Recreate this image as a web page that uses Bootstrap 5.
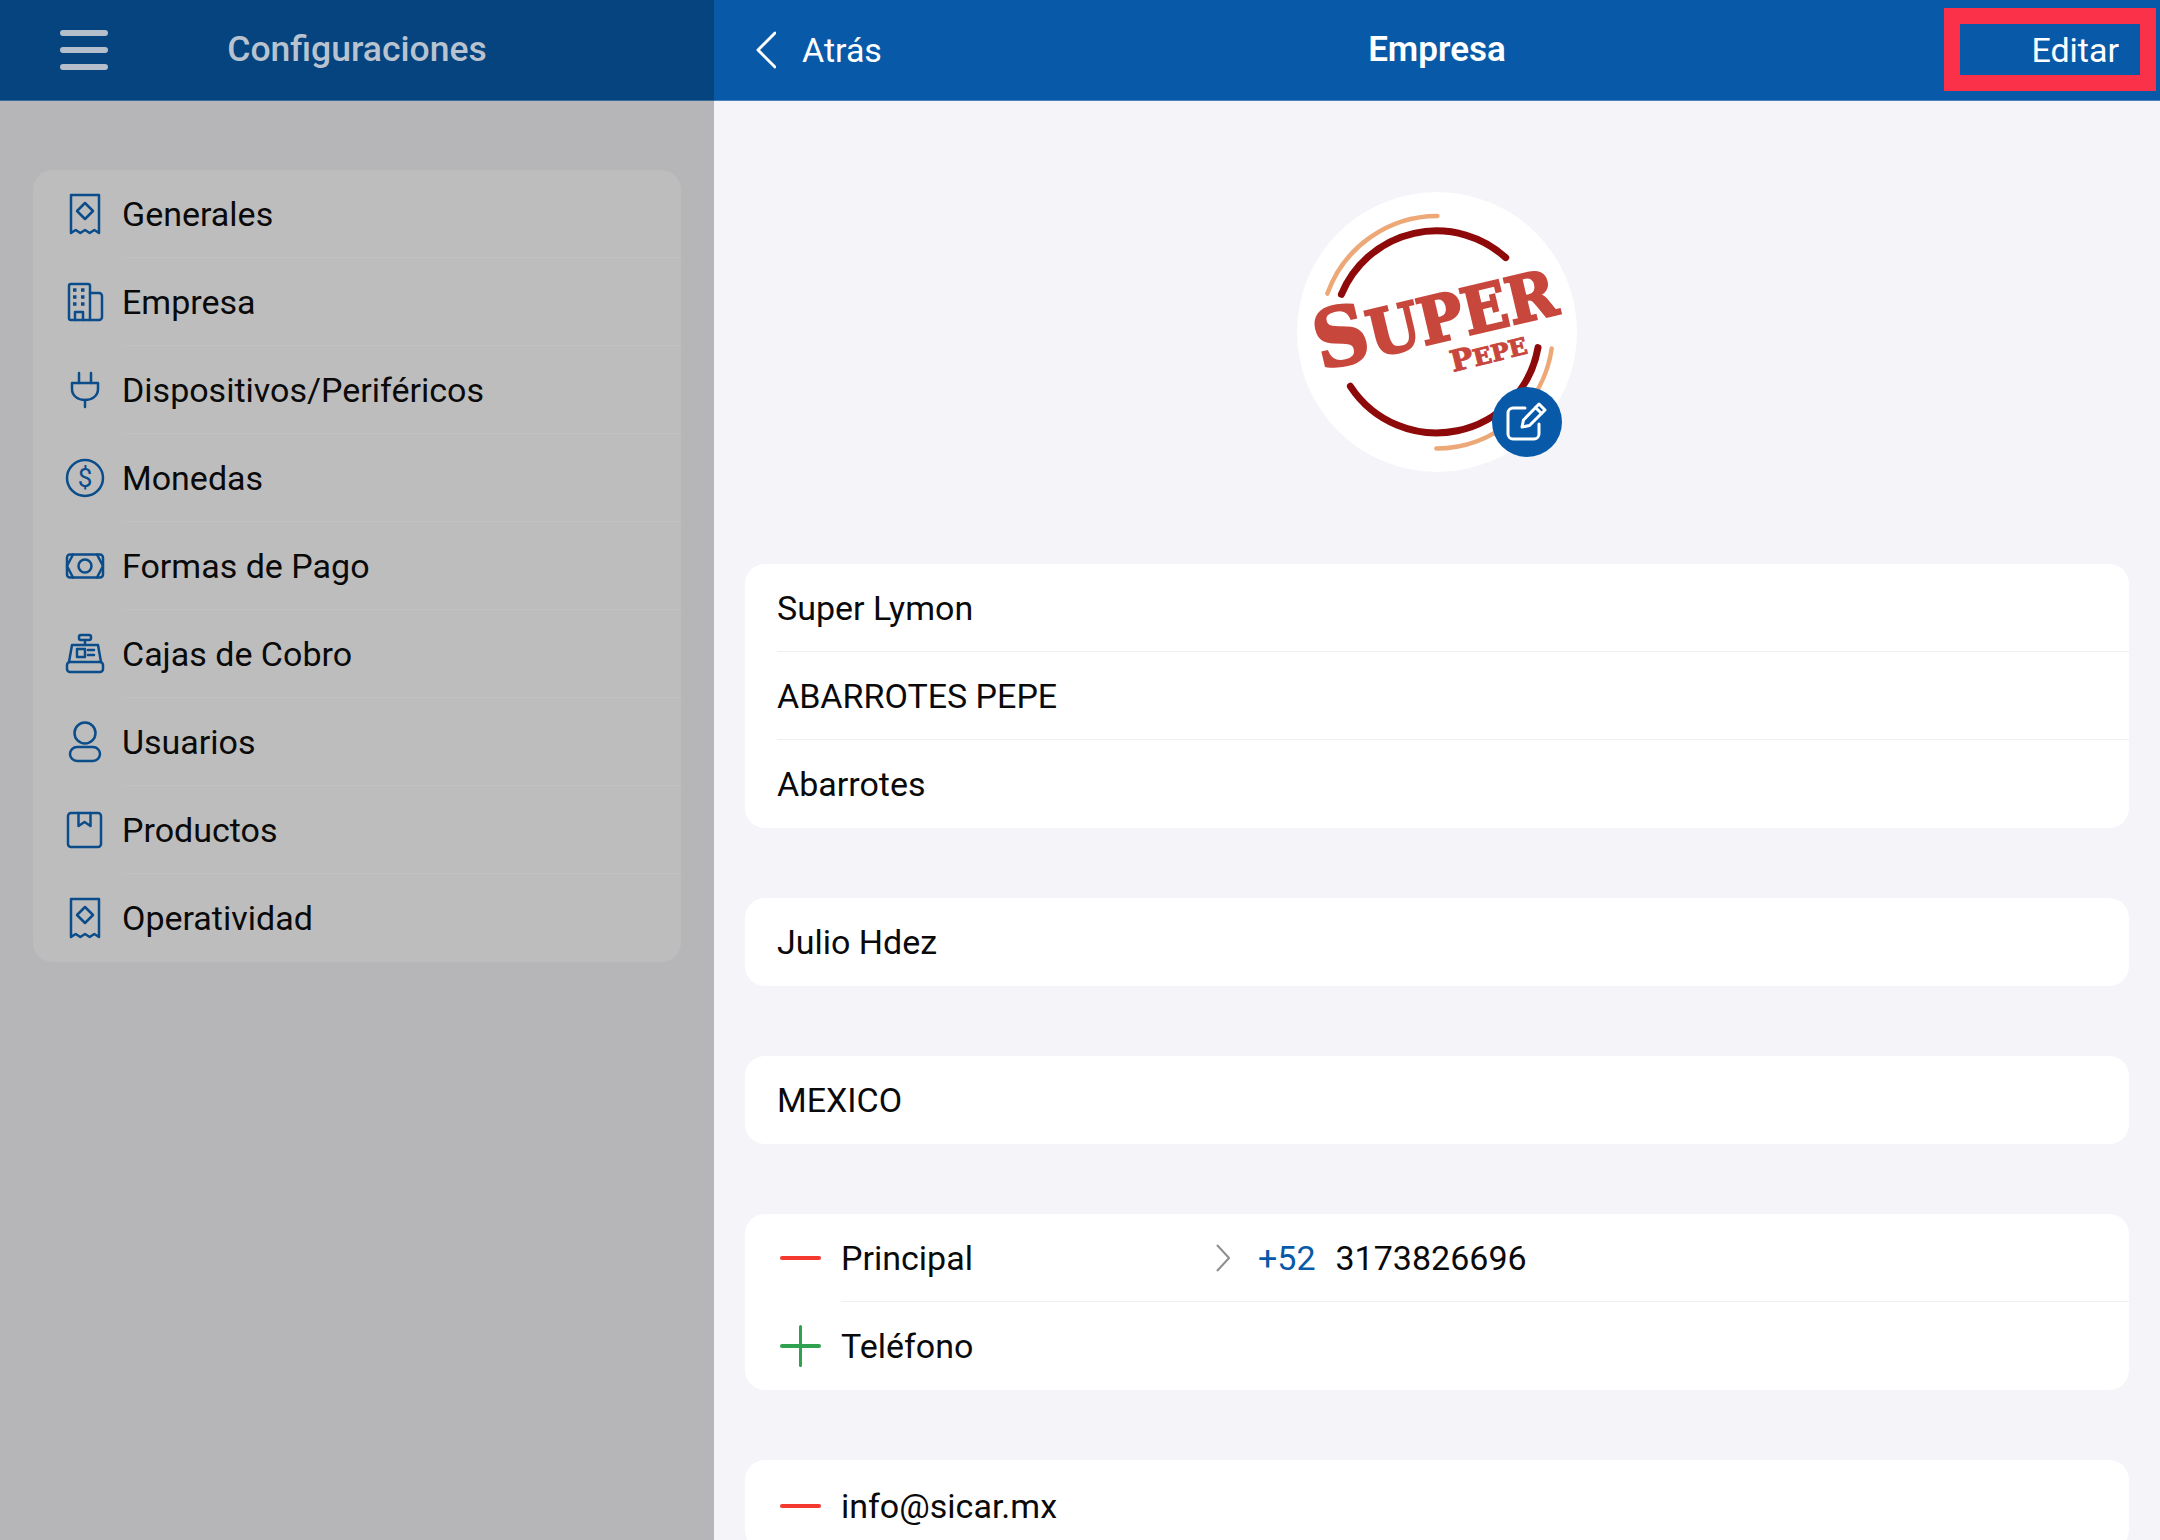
<!DOCTYPE html>
<html lang="es">
<head>
    <meta charset="UTF-8">
    <meta name="viewport" content="width=device-width, initial-scale=1.0">
    <title>Empresa</title>
    <link rel="stylesheet" href="https://cdn.jsdelivr.net/npm/bootstrap@5.3.0/dist/css/bootstrap.min.css">
    <style>
        body { font-family: Roboto, "Liberation Sans", sans-serif; font-size: 34px; background: #f4f4f9; color: #0a0a0a; }

        /* sidebar, dimmed */
        .side-pane { width: 714px; background: #b6b6b8; }
        .side-bar { height: 101px; background: #05447f; color: #b8c3cf; border-bottom: 1px solid #3a6a98; display: grid; grid-template-columns: 1fr auto 1fr; align-items: center; font-size: 35.500px; font-weight: 500; }
        .burger { margin-left: 60px; width: 48px; gap: 11px; }
        .burger span { height: 6px; background: #b5bfcc; border-radius: 3px; }
        .side-menu { margin: 69px 33px 0; border-radius: 20px; background: #bdbdbd; }
        .side-menu .list-group-item { background: transparent; border: 0; padding: 0 0 0 29px; color: #0a0a0a; }
        .side-ico { width: 44px; height: 44px; margin-right: 16px; fill: none; stroke: #0b4c8a; stroke-width: 2.500; stroke-linejoin: round; stroke-linecap: round; }
        .side-ico text { fill: #0b4c8a; stroke: none; font-size: 26px; font-family: Roboto, sans-serif; }
        .side-text { height: 88px; padding-top: 1px; border-bottom: 1px solid #c1c1c1; }
        .side-menu .list-group-item:last-child .side-text { border-bottom: 0; }

        /* detail pane */
        .main-pane { min-width: 0; }
        .main-bar { height: 101px; background: #085aa8; color: #fff; border-bottom: 1px solid #4a84bd; display: grid; grid-template-columns: 1fr auto 1fr; align-items: center; }
        .back-link { margin-left: 42px; gap: 26px; }
        .main-title { font-weight: 600; font-size: 35px; }
        .edit-link { padding-right: 41px; }
        .red-mark { position: absolute; left: 1230px; top: 8px; width: 212px; height: 83px; border: 16px solid #fb3049; }
        .logo-wrap { width: 280px; height: 280px; margin: 91px auto 92px; }
        .logo-wrap svg { display: block; }
        .logo-edit { position: absolute; right: 15px; bottom: 15px; width: 70px; height: 70px; }
        .form-block { margin: 0 31px 70px; border-radius: 20px; background: #fff; }
        .form-block .list-group-item { background: transparent; border: 0; padding: 0 0 0 32px; color: #0a0a0a; }
        .form-line { height: 88px; padding-top: 1px; border-bottom: 1px solid #eeeff2; }
        .form-block .list-group-item:last-child .form-line { border-bottom: 0; }
        .form-block .edit-row { padding-left: 35px; }
        .form-block .last-block { padding-top: 2px; }
        .sign-box { width: 41px; height: 42px; margin-right: 20px; position: relative; }
        .sign-minus::before, .sign-plus::before { content: ""; position: absolute; left: 0; right: 0; top: 19px; height: 4px; background: #f5392f; border-radius: 2px; }
        .sign-plus::before { background: #30a24f; }
        .sign-plus::after { content: ""; position: absolute; left: 19px; top: 0; width: 3px; height: 42px; background: #30a24f; border-radius: 2px; }
        .phone-label { width: 375px; }
        .phone-code { color: #085aa8; margin-left: 28px; margin-right: 20px; }
        .lbl-chev { width: 14px; height: 28px; fill: none; stroke: #8e8e93; stroke-width: 2; }
    </style>
</head>
<body class="d-flex vh-100 overflow-hidden">

    <!-- Sidebar -->
    <aside class="side-pane flex-shrink-0">
        <div class="side-bar">
            <div class="burger d-flex flex-column"><span class="d-block"></span><span class="d-block"></span><span class="d-block"></span></div>
            <div>Configuraciones</div>
        </div>
        <div class="side-menu list-group">
            <div class="list-group-item d-flex align-items-center">
                <svg class="side-ico flex-shrink-0" viewBox="0 0 44 44"><path d="M9 41V3h28v38l-4.700-3-4.600 3-4.700-3-4.700 3-4.600-3z"/><path d="M23 11l8 8-8 8-8-8z"/></svg>
                <div class="side-text flex-grow-1 d-flex align-items-center">Generales</div>
            </div>
            <div class="list-group-item d-flex align-items-center">
                <svg class="side-ico flex-shrink-0" viewBox="0 0 44 44"><path d="M9 40a2 2 0 0 1-2-2V6a2 2 0 0 1 2-2h17a2 2 0 0 1 2 2v34z"/><path d="M28 13h9a3 3 0 0 1 3 3v21a3 3 0 0 1-3 3h-9"/><path d="M13 40v-8h8v8"/><path stroke-linecap="butt" stroke-width="3.500" d="M11 10h3.500M19 10h3.500M11 17h3.500M19 17h3.500M11 24h3.500M19 24h3.500"/></svg>
                <div class="side-text flex-grow-1 d-flex align-items-center">Empresa</div>
            </div>
            <div class="list-group-item d-flex align-items-center">
                <svg class="side-ico flex-shrink-0" viewBox="0 0 44 44"><path d="M17 5v10M29 5v10"/><path d="M10 15h26v6c0 7-6 11-13 11s-13-4-13-11z"/><path d="M23 32v7"/></svg>
                <div class="side-text flex-grow-1 d-flex align-items-center">Dispositivos/Periféricos</div>
            </div>
            <div class="list-group-item d-flex align-items-center">
                <svg class="side-ico flex-shrink-0" viewBox="0 0 44 44"><circle cx="23" cy="22" r="18"/><text x="23" y="31" text-anchor="middle">$</text></svg>
                <div class="side-text flex-grow-1 d-flex align-items-center">Monedas</div>
            </div>
            <div class="list-group-item d-flex align-items-center">
                <svg class="side-ico flex-shrink-0" viewBox="0 0 44 44"><rect x="5" y="10.500" width="36" height="23" rx="3"/><circle cx="23" cy="22" r="6.500"/><path d="M11 10.500l-6 11.500 6 11.500M35 10.500l6 11.500-6 11.500"/></svg>
                <div class="side-text flex-grow-1 d-flex align-items-center">Formas de Pago</div>
            </div>
            <div class="list-group-item d-flex align-items-center">
                <svg class="side-ico flex-shrink-0" viewBox="0 0 44 44"><rect x="17" y="3" width="12" height="5" rx="2"/><path d="M23 8v5"/><path d="M7 30l3-17h26l3 17"/><rect x="5" y="30" width="36" height="10" rx="3"/><rect x="15" y="17" width="8" height="8"/><path d="M26 18h6M26 23h6"/></svg>
                <div class="side-text flex-grow-1 d-flex align-items-center">Cajas de Cobro</div>
            </div>
            <div class="list-group-item d-flex align-items-center">
                <svg class="side-ico flex-shrink-0" viewBox="0 0 44 44"><ellipse cx="23" cy="13" rx="10.500" ry="10.500"/><rect x="8" y="27" width="30" height="14" rx="7"/></svg>
                <div class="side-text flex-grow-1 d-flex align-items-center">Usuarios</div>
            </div>
            <div class="list-group-item d-flex align-items-center">
                <svg class="side-ico flex-shrink-0" viewBox="0 0 44 44"><rect x="6" y="5" width="33" height="34" rx="3"/><path d="M16.500 5v13l6-4 6 4V5"/></svg>
                <div class="side-text flex-grow-1 d-flex align-items-center">Productos</div>
            </div>
            <div class="list-group-item d-flex align-items-center">
                <svg class="side-ico flex-shrink-0" viewBox="0 0 44 44"><path d="M9 41V3h28v38l-4.700-3-4.600 3-4.700-3-4.700 3-4.600-3z"/><path d="M23 11l8 8-8 8-8-8z"/></svg>
                <div class="side-text flex-grow-1 d-flex align-items-center">Operatividad</div>
            </div>
        </div>
    </aside>

    <!-- Empresa -->
    <main class="main-pane flex-grow-1 position-relative">
        <div class="main-bar">
            <div class="back-link d-flex align-items-center">
                <svg width="20" height="38" viewBox="0 0 20 38" fill="none" stroke="#fff" stroke-width="3" stroke-linecap="round" stroke-linejoin="round"><path d="M19 2L2 19l17 17"/></svg>
                <span>Atrás</span>
            </div>
            <div class="main-title">Empresa</div>
            <div class="edit-link text-end">Editar</div>
        </div>
        <div class="red-mark"></div>

        <div class="logo-wrap position-relative">
            <svg width="280" height="280" viewBox="0 0 280 280">
                <circle cx="140" cy="140" r="140" fill="#fff"/>
                <g fill="none" stroke-linecap="round">
                    <path d="M30.400 101.600A117 117 0 0 1 140.400 24" stroke="#eda878" stroke-width="4.500"/>
                    <path d="M139.400 256.600A117 117 0 0 0 254.700 156.600" stroke="#eda878" stroke-width="4.500"/>
                    <path d="M44.400 102.300A103 103 0 0 1 208.700 65.600" stroke="#8e0a0a" stroke-width="7"/>
                    <path d="M53.400 194.300A103 103 0 0 0 241 155.600" stroke="#8e0a0a" stroke-width="7"/>
                </g>
                <g fill="#c8473c" stroke="#c8473c" font-family="'DejaVu Serif', 'Liberation Serif', serif" font-weight="700">
                    <text transform="translate(24 178) rotate(-13.300)" stroke-width="2.500" font-size="64" textLength="246" lengthAdjust="spacingAndGlyphs"><tspan font-size="80">S</tspan>UPER</text>
                    <text transform="translate(156 180) rotate(-14)" stroke-width="1" font-size="23" textLength="78" lengthAdjust="spacingAndGlyphs"><tspan font-size="29">P</tspan>EPE</text>
                </g>
            </svg>
            <svg class="logo-edit" viewBox="0 0 70 70" fill="none" stroke="#fff" stroke-width="3" stroke-linejoin="round" stroke-linecap="round">
                <circle cx="35" cy="35" r="35" fill="#085aa8" stroke="none"/>
                <path d="M33 21H21a5 5 0 0 0-5 5v21a5 5 0 0 0 5 5h21a5 5 0 0 0 5-5V37"/>
                <path d="M30 40l1.500-7L47 17l6 6-15.500 15.500z"/>
                <path d="M43.500 20.500l6 6"/>
            </svg>
        </div>

        <div class="form-block list-group">
            <div class="list-group-item"><div class="form-line d-flex align-items-center">Super Lymon</div></div>
            <div class="list-group-item"><div class="form-line d-flex align-items-center">ABARROTES PEPE</div></div>
            <div class="list-group-item"><div class="form-line d-flex align-items-center">Abarrotes</div></div>
        </div>
        <div class="form-block list-group">
            <div class="list-group-item"><div class="form-line d-flex align-items-center">Julio Hdez</div></div>
        </div>
        <div class="form-block list-group">
            <div class="list-group-item"><div class="form-line d-flex align-items-center">MEXICO</div></div>
        </div>
        <div class="form-block list-group">
            <div class="list-group-item edit-row d-flex align-items-center">
                <div class="sign-box sign-minus flex-shrink-0"></div>
                <div class="form-line flex-grow-1 d-flex align-items-center">
                    <span class="phone-label">Principal</span>
                    <svg class="lbl-chev" viewBox="0 0 14 28"><path d="M1 1l12 13L1 27"/></svg>
                    <span class="phone-code">+52</span>
                    <span>3173826696</span>
                </div>
            </div>
            <div class="list-group-item edit-row d-flex align-items-center">
                <div class="sign-box sign-plus flex-shrink-0"></div>
                <div class="form-line flex-grow-1 d-flex align-items-center">Teléfono</div>
            </div>
        </div>
        <div class="form-block list-group">
            <div class="list-group-item edit-row last-block d-flex align-items-center">
                <div class="sign-box sign-minus flex-shrink-0"></div>
                <div class="form-line flex-grow-1 d-flex align-items-center">info@sicar.mx</div>
            </div>
        </div>
    </main>

    <script src="https://cdn.jsdelivr.net/npm/bootstrap@5.3.0/dist/js/bootstrap.bundle.min.js"></script>
</body>
</html>
